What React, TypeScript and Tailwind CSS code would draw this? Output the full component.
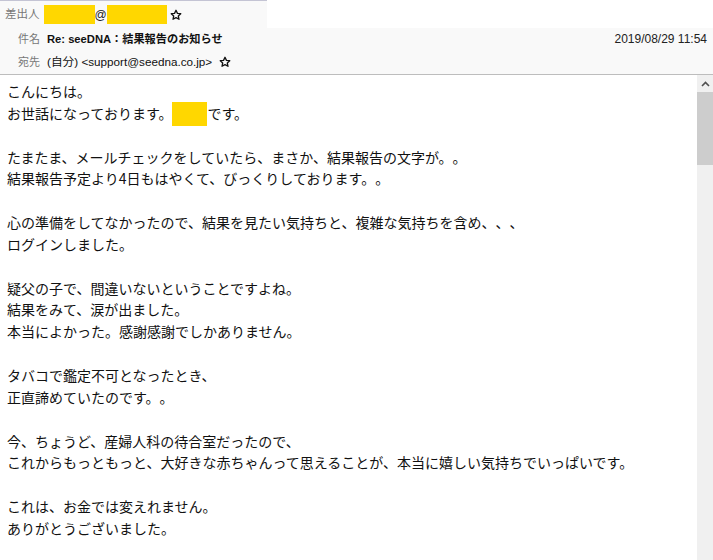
import React from "react";

const Star = () => (
  <svg width="12" height="12" viewBox="0 0 24 24" className="inline-block">
    <path
      d="M12 2.5l2.9 6.2 6.6.7-4.9 4.6 1.4 6.6L12 17.3l-6 3.3 1.4-6.6-4.9-4.6 6.6-.7z"
      fill="none"
      stroke="#111"
      strokeWidth="2.6"
      strokeLinejoin="round"
    />
  </svg>
);

const lines: string[] = [
  "こんにちは。",
  "__NAME__",
  "",
  "たまたま、メールチェックをしていたら、まさか、結果報告の文字が。。",
  "結果報告予定より4日もはやくて、びっくりしております。。",
  "",
  "心の準備をしてなかったので、結果を見たい気持ちと、複雑な気持ちを含め、、、",
  "ログインしました。",
  "",
  "疑父の子で、間違いないということですよね。",
  "結果をみて、涙が出ました。",
  "本当によかった。感謝感謝でしかありません。",
  "",
  "タバコで鑑定不可となったとき、",
  "正直諦めていたのです。。",
  "",
  "今、ちょうど、産婦人科の待合室だったので、",
  "これからもっともっと、大好きな赤ちゃんって思えることが、本当に嬉しい気持ちでいっぱいです。",
  "",
  "これは、お金では変えれません。",
  "ありがとうございました。",
  "",
];

export default function App() {
  return (
    <div
      className="w-[713px] h-[560px] overflow-hidden bg-white flex flex-col [text-spacing-trim:space-all]"
      style={{ fontFamily: '"Liberation Sans", "Noto Sans CJK JP", sans-serif' }}
    >
      {/* header */}
      <div className="flex flex-col border-b border-[#bdbdbd]">
        <div className="flex">
          <div className="w-[267px] h-[28px] bg-[#f9f9f9] border-t border-[#c4c4d4] flex items-center pl-[5px] text-[11.5px]">
            <span className="text-[#777]">差出人</span>
            <span className="ml-[4px] w-[51px] h-[19px] bg-[#ffd700]" />
            <span className="w-[12px] text-center text-[#222] text-[12px]">@</span>
            <span className="w-[60px] h-[19px] bg-[#ffd700]" />
            <span className="ml-[3px] flex items-center"><Star /></span>
          </div>
          <div className="flex-1 bg-white" />
        </div>
        <div className="bg-[#f9f9f9] h-[22px] flex items-center pl-[18px] pr-[6px] text-[11px]">
          <span className="text-[#777] w-[29px]">件名</span>
          <span className="font-bold text-[#111] text-[11.2px]">Re: seeDNA：結果報告のお知らせ</span>
          <span className="ml-auto text-[#222] text-[12px]">2019/08/29 11:54</span>
        </div>
        <div className="bg-[#f9f9f9] h-[24px] flex items-center pl-[18px] text-[11px]">
          <span className="text-[#777] w-[29px]">宛先</span>
          <span className="text-[#111] text-[11.7px]">(自分) &lt;support@seedna.co.jp&gt;</span>
          <span className="ml-[7px] flex items-center"><Star /></span>
        </div>
      </div>
      {/* body */}
      <div className="flex flex-1 min-h-0">
        <div
          className="flex-1 pl-[7px] pt-[6px] text-[14px] leading-[21.85px] text-[#111]"
          style={{ fontFamily: '"Noto Sans CJK JP", sans-serif' }}
        >
          {lines.map((l, i) =>
            l === "__NAME__" ? (
              <div key={i} className="h-[21.85px] flex items-center">
                <span>お世話になっております。</span>
                <span className="w-[35px] h-[24px] bg-[#ffd700]" />
                <span>です。</span>
              </div>
            ) : (
              <div key={i} className="h-[21.85px] whitespace-nowrap">
                {l}
              </div>
            )
          )}
        </div>
        <div className="w-[16px] bg-[#f0f0f0] flex flex-col">
          <div className="h-[17px] flex items-center justify-center">
            <svg width="9" height="6" viewBox="0 0 9 6">
              <path d="M1 5L4.5 1.5L8 5" fill="none" stroke="#505050" strokeWidth="1.6" />
            </svg>
          </div>
          <div className="h-[73px] bg-[#cdcdcd]" />
        </div>
      </div>
    </div>
  );
}
